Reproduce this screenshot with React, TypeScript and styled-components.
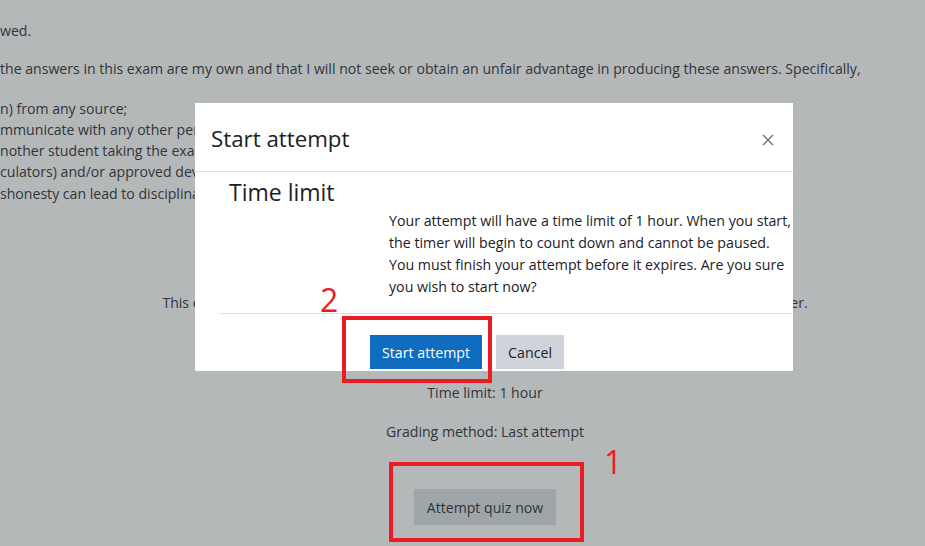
import React from "react";
import styled, { createGlobalStyle } from "styled-components";

const GlobalStyle = createGlobalStyle`
  html, body {
    margin: 0;
    padding: 0;
    background: #b5b8b8;
  }
  body {
    font-family: "Open Sans", "Noto Sans", sans-serif;
    -webkit-font-smoothing: antialiased;
  }
  * { box-sizing: border-box; }
`;

const Page = styled.div`
  position: relative;
  width: 925px;
  height: 546px;
  overflow: hidden;
  background: #b5b8b8;
  color: #30353a;
  font-size: 14.1px;
`;

const LeftText = styled.div`
  padding-top: 20px;
  display: flex;
  flex-direction: column;
`;

const Para = styled.p<{ $gap?: number }>`
  margin: 0 0 ${(p) => p.$gap ?? 0}px 0;
  line-height: 21.3px;
  white-space: nowrap;
`;

const Center = styled.div`
  margin-left: 45px;
  display: flex;
  flex-direction: column;
  align-items: center;
  padding-top: 88px;
`;

const CenterLine = styled.p<{ $gap: number }>`
  margin: 0 0 ${(p) => p.$gap}px 0;
  line-height: 21px;
  white-space: nowrap;
`;

const BgButton = styled.div`
  background: #9fa6aa;
  color: #2f3439;
  height: 36px;
  padding: 0 13px;
  display: flex;
  align-items: center;
  font-size: 14.1px;
`;

const Modal = styled.div`
  position: absolute;
  left: 195px;
  top: 103px;
  width: 598px;
  height: 268px;
  background: #ffffff;
  color: #1d2125;
  overflow: hidden;
  display: flex;
  flex-direction: column;
`;

const ModalHeader = styled.div`
  height: 69px;
  flex: none;
  display: flex;
  align-items: center;
  justify-content: space-between;
  padding: 5px 18px 0 16px;
  border-bottom: 1px solid #dee2e6;
`;

const ModalTitle = styled.h5`
  margin: 0;
  font-weight: 400;
  font-size: 22.3px;
  line-height: 1.2;
`;

const CloseButton = styled.button`
  border: 0;
  background: transparent;
  padding: 0;
  width: 14px;
  height: 14px;
  display: flex;
  align-items: center;
  justify-content: center;
  color: #6a737b;
  cursor: pointer;
`;

const ModalBody = styled.div`
  padding: 0 0 0 24px;
  display: flex;
  flex-direction: column;
`;

const SectionTitle = styled.h3`
  margin: 5px 0 0 10px;
  font-weight: 400;
  font-size: 23px;
  line-height: 30px;
`;

const Message = styled.p`
  margin: 3px 0 0 170px;
  font-size: 14.2px;
  line-height: 22px;
  white-space: nowrap;
  padding-bottom: 15px;
`;

const Footer = styled.div`
  border-top: 1px solid #dee2e6;
  display: flex;
  gap: 14px;
  padding: 21px 0 0 151px;
`;

const Button = styled.button<{ $primary?: boolean }>`
  border: 0;
  height: 34px;
  padding: 0 12px;
  font-family: inherit;
  font-size: 14.2px;
  background: ${(p) => (p.$primary ? "#0f6cbf" : "#ced4da")};
  color: ${(p) => (p.$primary ? "#ffffff" : "#1d2125")};
  cursor: pointer;
`;

const RedBox = styled.div<{ $l: number; $t: number; $w: number; $h: number }>`
  position: absolute;
  left: ${(p) => p.$l}px;
  top: ${(p) => p.$t}px;
  width: ${(p) => p.$w}px;
  height: ${(p) => p.$h}px;
  border: 4px solid #ec1c24;
  pointer-events: none;
`;

const RedNumber = styled.span<{ $l: number; $t: number }>`
  position: absolute;
  left: ${(p) => p.$l}px;
  top: ${(p) => p.$t}px;
  color: #ec1c24;
  font-family: "Open Sans", sans-serif;
  font-size: 32px;
  line-height: 1;
`;

export default function App() {
  return (
    <>
      <GlobalStyle />
      <Page>
        <LeftText>
          <Para $gap={17}>wed.</Para>
          <Para $gap={18}>
            the answers in this exam are my own and that I will not seek or obtain an unfair advantage in producing these answers. Specifically,
          </Para>
          <Para>n) from any source;</Para>
          <Para>mmunicate with any other person during the exam;</Para>
          <Para>nother student taking the exam in any way;</Para>
          <Para>culators) and/or approved devices only;</Para>
          <Para>shonesty can lead to disciplinary action.</Para>
        </LeftText>
        <Center>
          <CenterLine $gap={69}>
            This quiz has a time limit and will be submitted automatically when time ends, whichever is earlier.
          </CenterLine>
          <CenterLine $gap={18}>Time limit: 1 hour</CenterLine>
          <CenterLine $gap={47}>Grading method: Last attempt</CenterLine>
          <BgButton>Attempt quiz now</BgButton>
        </Center>

        <Modal role="dialog" aria-label="Start attempt">
          <ModalHeader>
            <ModalTitle>Start attempt</ModalTitle>
            <CloseButton aria-label="Close">
              <svg width="12" height="12" viewBox="0 0 12 12" fill="none" stroke="currentColor" strokeWidth="1.3">
                <path d="M1 1 L11 11 M11 1 L1 11" />
              </svg>
            </CloseButton>
          </ModalHeader>
          <ModalBody>
            <SectionTitle>Time limit</SectionTitle>
            <Message>
              Your attempt will have a time limit of 1 hour. When you start,
              <br />
              the timer will begin to count down and cannot be paused.
              <br />
              You must finish your attempt before it expires. Are you sure
              <br />
              you wish to start now?
            </Message>
            <Footer>
              <Button $primary>Start attempt</Button>
              <Button>Cancel</Button>
            </Footer>
          </ModalBody>
        </Modal>

        <RedBox $l={342} $t={316} $w={150} $h={67} />
        <RedNumber $l={320} $t={284}>2</RedNumber>
        <RedBox $l={389} $t={462} $w={195} $h={80} />
        <RedNumber $l={604} $t={446}>1</RedNumber>
      </Page>
    </>
  );
}
